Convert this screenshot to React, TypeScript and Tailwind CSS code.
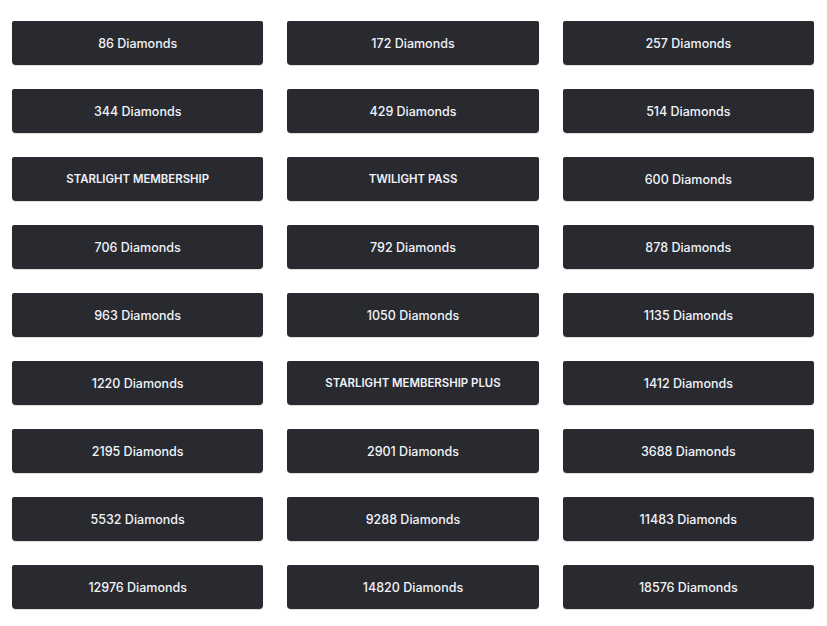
import React from "react";

const items = [
  "86 Diamonds", "172 Diamonds", "257 Diamonds",
  "344 Diamonds", "429 Diamonds", "514 Diamonds",
  "STARLIGHT MEMBERSHIP", "TWILIGHT PASS", "600 Diamonds",
  "706 Diamonds", "792 Diamonds", "878 Diamonds",
  "963 Diamonds", "1050 Diamonds", "1135 Diamonds",
  "1220 Diamonds", "STARLIGHT MEMBERSHIP PLUS", "1412 Diamonds",
  "2195 Diamonds", "2901 Diamonds", "3688 Diamonds",
  "5532 Diamonds", "9288 Diamonds", "11483 Diamonds",
  "12976 Diamonds", "14820 Diamonds", "18576 Diamonds",
];

export default function App() {
  return (
    <div className="w-[827px] h-[626px] bg-white pl-[12px] pt-[21px]" style={{ fontFamily: "Inter, 'Open Sans', sans-serif" }}>
      <div className="grid grid-cols-3 w-[802px] gap-x-[24px] gap-y-[24px]">
        {items.map((t) => {
          const upper = t === t.toUpperCase() && !/\d/.test(t);
          return (
            <button
              key={t}
              className={
                "h-[44px] pt-[2px] bg-[#282a30] rounded-b-[4px] rounded-t-[2px] text-[#f1f3f8] flex items-center justify-center shadow-[0_1px_1px_rgba(0,0,0,0.15)] " +
                (upper ? "text-[11.4px] font-semibold" : "text-[12.5px] font-medium")
              }
            >
              {t}
            </button>
          );
        })}
      </div>
    </div>
  );
}
